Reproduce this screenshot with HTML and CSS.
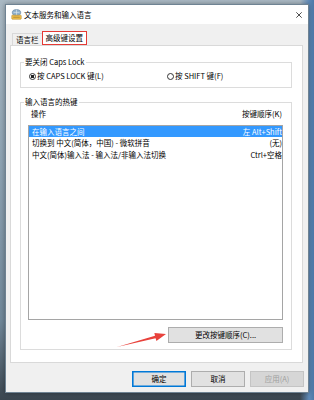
FILE: index.html
```html
<!DOCTYPE html>
<html lang="zh-CN">
<head>
<meta charset="utf-8">
<title>文本服务和输入语言</title>
<link rel="stylesheet" href="styles.css">
</head>
<body>
<div class="window">
  <div class="titlebar">
    <svg class="appicon" viewBox="0 0 11 11" width="11" height="11">
      <ellipse cx="5.5" cy="3.6" rx="4.2" ry="3" fill="#8fb0cc" stroke="#5f7f9c" stroke-width="0.6"/>
      <path d="M2.5 3.4 H8.5 M5.5 0.8 V6.4" stroke="#dfe9f2" stroke-width="0.6"/>
      <rect x="0.8" y="6.2" width="9.4" height="4" rx="0.6" fill="#f2c14e" stroke="#b58a2a" stroke-width="0.6"/>
      <path d="M2.2 8.2 H8.8" stroke="#8a6a20" stroke-width="0.6"/>
    </svg>
    <span class="title">文本服务和输入语言</span>
    <svg class="close" viewBox="0 0 6 6" width="6" height="6">
      <path d="M0.3 0.3 L5.7 5.7 M5.7 0.3 L0.3 5.7" stroke="#222" stroke-width="0.8"/>
    </svg>
  </div>
  <div class="client">
    <div class="tabs">
      <div class="tab">语言栏</div>
      <div class="tab active">高级键设置</div>
    </div>
    <div class="panel">
      <fieldset class="group g1">
        <legend>要关闭 Caps Lock</legend>
        <div class="radios">
          <span class="radio first"><span class="dot on"></span>按 CAPS LOCK 键(L)</span>
          <span class="radio"><span class="dot"></span>按 SHIFT 键(F)</span>
        </div>
      </fieldset>
      <fieldset class="group g2">
        <legend>输入语言的热键</legend>
        <div class="cols"><span>操作</span><span>按键顺序(K)</span></div>
        <div class="list">
          <div class="row sel"><span>在输入语言之间</span><span>左 Alt+Shift</span></div>
          <div class="row"><span>切换到 中文(简体，中国) - 微软拼音</span><span>(无)</span></div>
          <div class="row"><span>中文(简体)输入法 - 输入法/非输入法切换</span><span>Ctrl+空格</span></div>
        </div>
        <div class="actions"><button class="btn change">更改按键顺序(C)...</button></div>
      </fieldset>
    </div>
    <div class="footer">
      <button class="btn primary">确定</button>
      <button class="btn">取消</button>
      <button class="btn disabled">应用(A)</button>
    </div>
  </div>
</div>
<svg class="arrow" viewBox="0 0 62 24" width="62" height="24">
  <polygon points="7,19 45.6,10.2 46.4,12.9 56,6 44.4,5.0 45,7.7" fill="#e8423c"/>
</svg>
</body>
</html>
```
FILE: styles.css
```css
html, body {
  margin: 0;
}
body {
  width: 314px;
  height: 400px;
  box-sizing: border-box;
  padding: 4px 5px;
  overflow: hidden;
  position: relative;
  font-family: "Noto Sans CJK SC", "Noto Sans", sans-serif;
  font-size: 7.5px;
  color: #000;
  background:
    linear-gradient(90deg, rgba(120,150,175,0) 0, rgba(120,150,175,0) 300px, #5f8ab8 309px, #4d79a8 314px),
    linear-gradient(180deg, #aab9c4 0, #8ea3b3 40%, #71889a 80%, #3b4650 100%);
}
.window {
  width: 304px;
  height: 389px;
  box-sizing: border-box;
  border: 1px solid #6f8393;
  display: flex;
  flex-direction: column;
  box-shadow: 0 0 5px rgba(0,0,0,0.35);
}
.titlebar {
  height: 19px;
  background: #fff;
  display: flex;
  align-items: center;
}
.appicon {
  margin-left: 5px;
}
.title {
  margin-left: 2px;
  line-height: 10px;
}
.close {
  margin-left: auto;
  margin-right: 6px;
}
.client {
  flex: 1;
  background: #f0f0f0;
  padding: 7px 5px 0 4px;
  display: flex;
  flex-direction: column;
}
.tabs {
  display: flex;
  align-items: flex-end;
  height: 14px;
  padding-left: 2px;
}
.tab {
  box-sizing: border-box;
  height: 12px;
  line-height: 11px;
  padding: 0 3px;
  border: 1px solid #d9d9d9;
  border-bottom: none;
  background: #f0f0f0;
}
.tab.active {
  height: 14px;
  line-height: 11px;
  margin-left: -1px;
  background: #fff;
  border: 1.5px solid #e53a35;
  position: relative;
  z-index: 1;
}
.panel {
  height: 318px;
  box-sizing: border-box;
  background: #fff;
  border: 1px solid #d9d9d9;
  padding: 11px 10px 0 9px;
}
.group {
  margin: 0;
  min-width: 0;
  border: 1px solid #dcdcdc;
  padding: 0 8px 6px 7px;
}
.group legend {
  padding: 0 1px;
  margin-left: -4px;
  line-height: 10px;
}
.radios {
  display: flex;
  align-items: center;
  height: 10px;
  padding-top: 4px;
}
.radio {
  display: flex;
  align-items: center;
  line-height: 10px;
}
.radio.first {
  width: 138px;
}
.dot {
  width: 7px;
  height: 7px;
  box-sizing: border-box;
  border: 1px solid #333;
  border-radius: 50%;
  margin: 0 1px 0 1px;
  background: #fff;
}
.dot.on {
  background: radial-gradient(circle, #222 0, #222 1.6px, #fff 1.9px);
}
.g2 {
  margin-top: 9px;
}
.cols {
  display: flex;
  justify-content: space-between;
  padding: 2px 1px 0 3px;
  line-height: 10px;
}
.list {
  margin-top: 6px;
  height: 195px;
  box-sizing: border-box;
  border: 1px solid #a5a5a5;
}
.row {
  display: flex;
  justify-content: space-between;
  height: 12px;
  line-height: 12px;
  padding: 0 0 0 3px;
}
.row.sel {
  background: #3399ff;
  color: #fff;
  height: 11px;
  line-height: 11px;
}
.actions {
  display: flex;
  justify-content: flex-end;
  margin-top: 7px;
}
.btn {
  font-family: inherit;
  font-size: 7.5px;
  color: #000;
  background: #e1e1e1;
  border: 1px solid #adadad;
  padding: 0;
  height: 16px;
  line-height: 12px;
  box-sizing: border-box;
}
.btn.change {
  width: 115px;
}
.footer {
  display: flex;
  justify-content: flex-end;
  gap: 5px;
  margin-top: 8px;
  margin-right: -1px;
}
.footer .btn {
  width: 54px;
}
.btn.primary {
  border: 1px solid #0078d7;
  box-shadow: inset 0 0 0 0.6px #0078d7;
}
.btn.disabled {
  background: #d6d6d6;
  border-color: #c4c4c4;
  color: #a0a0a0;
}
.arrow {
  position: absolute;
  left: 110px;
  top: 328px;
}
```
